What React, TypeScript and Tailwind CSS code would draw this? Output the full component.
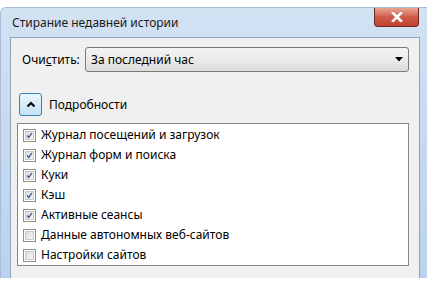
import React from "react";

const ITEMS: { label: string; checked: boolean }[] = [
  { label: "Журнал посещений и загрузок", checked: true },
  { label: "Журнал форм и поиска", checked: true },
  { label: "Куки", checked: true },
  { label: "Кэш", checked: true },
  { label: "Активные сеансы", checked: true },
  { label: "Данные автономных веб-сайтов", checked: false },
  { label: "Настройки сайтов", checked: false },
];

function CheckBox({ checked }: { checked: boolean }) {
  return (
    <div className="w-[13px] h-[13px] border border-[#8e8f8f] bg-white p-[1px] shrink-0">
      <div className="w-full h-full bg-gradient-to-br from-[#dcdcdc] to-[#f6f6f6] border border-[#c8c8c8] flex items-center justify-center">
        {checked && (
          <svg width="9" height="9" viewBox="0 0 9 9">
            <path d="M1.5 4.5 L3.5 7 L7.5 1.5" fill="none" stroke="#3d5a8a" strokeWidth="1.6" />
          </svg>
        )}
      </div>
    </div>
  );
}

export default function App() {
  return (
    <div
      className="w-[429px] h-[283px] bg-white overflow-hidden pt-[7px] pr-[2px] text-[12px] text-black"
      style={{ fontFamily: '"Noto Sans", "Open Sans", sans-serif' }}
    >
      {/* Window frame */}
      <div className="h-[271px] rounded-tl-[6px] bg-gradient-to-b from-[#d3e2f3] via-[#c6d9ef] to-[#bcd2ec] border-l border-t border-[#a8bdd6] flex flex-col">
        {/* Title bar */}
        <div className="h-[29px] flex items-start justify-between shrink-0">
          <span className="pl-[11px] pt-[7px] leading-[16px] text-[#1a1a1a]">Стирание недавней истории</span>
          <div className="mr-[8px] w-[45px] h-[19px] rounded-b-[4px] border border-t-0 border-[#6b2a24] bg-gradient-to-b from-[#e8a595] via-[#cf5c4a] to-[#c2412f] flex items-center justify-center">
            <svg width="12" height="10" viewBox="0 0 12 10">
              <path d="M2 1 L10 9 M10 1 L2 9" stroke="#ffffff" strokeWidth="2.6" strokeLinecap="square" />
              <path d="M2 1 L10 9 M10 1 L2 9" stroke="#ffffff" strokeWidth="1.6" />
            </svg>
          </div>
        </div>

        {/* Client area */}
        <div className="flex-1 ml-[9px] mr-[7px] bg-[#f0f0f0] border border-b-0 border-[#8fa3bb] flex flex-col">
          {/* Time range */}
          <div className="flex items-center mt-[9px] pl-[11px] pr-[10px]">
            <span className="w-[63px]">
              Очи<span className="underline">с</span>тить:
            </span>
            <div className="flex-1 h-[25px] rounded-[3px] border border-[#7a7a7a] bg-gradient-to-b from-[#f3f3f3] via-[#ebebeb] to-[#dcdcdc] flex items-center justify-between pl-[5px] pr-[5px]">
              <span>За последний час</span>
              <svg width="8" height="5" viewBox="0 0 8 5">
                <path d="M0 0 H8 L4 4.5 Z" fill="#000000" />
              </svg>
            </div>
          </div>

          {/* Details toggle */}
          <div className="flex items-center mt-[21px] pl-[8px]">
            <div className="w-[23px] h-[23px] rounded-[3px] border border-[#3c7fb1] bg-gradient-to-b from-[#eaf6fd] to-[#c4e2f5] flex items-center justify-center">
              <svg width="10" height="7" viewBox="0 0 10 7">
                <path d="M1.5 5.5 L5 2 L8.5 5.5" fill="none" stroke="#000000" strokeWidth="2" />
              </svg>
            </div>
            <span className="ml-[7px]">Подробности</span>
          </div>

          {/* Items list */}
          <div className="mt-[7px] ml-[6px] mr-[10px] h-[143px] bg-white border border-[#828790] pt-[1px]">
            {ITEMS.map((it) => (
              <div key={it.label} className="h-[20px] flex items-center pl-[5px]">
                <CheckBox checked={it.checked} />
                <span className="ml-[5px] leading-[16px]">{it.label}</span>
              </div>
            ))}
          </div>
        </div>
      </div>
    </div>
  );
}
